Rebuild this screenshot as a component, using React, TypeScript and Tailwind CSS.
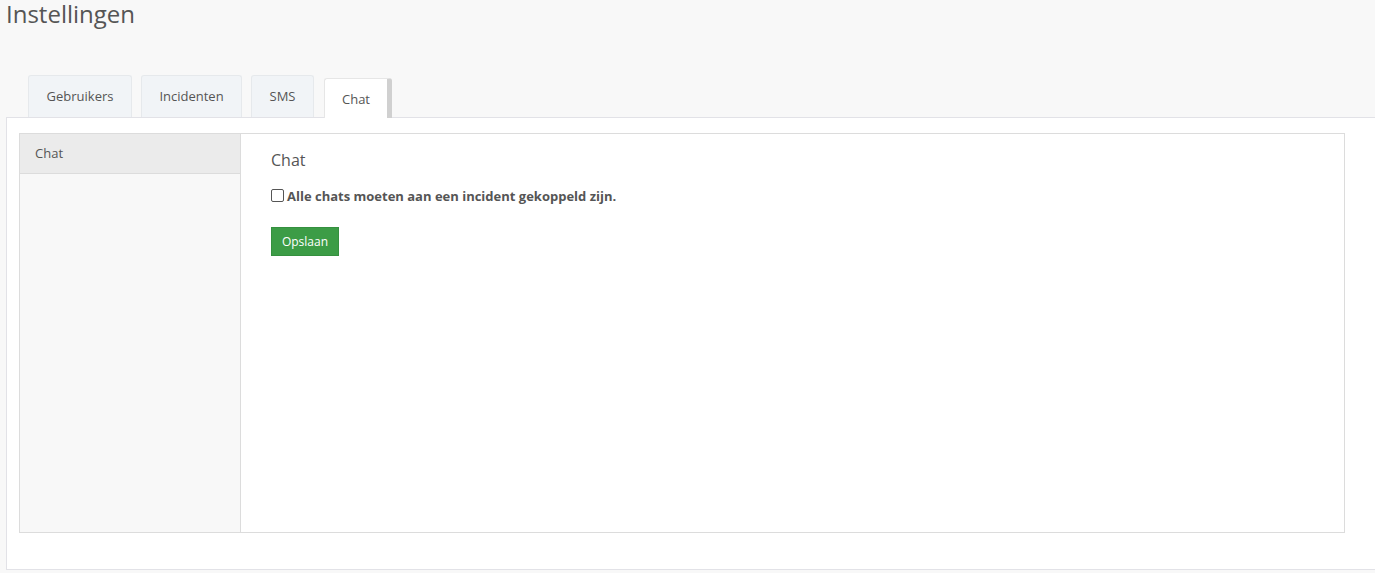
import React from "react";

export default function App() {
  const font = { fontFamily: '"Open Sans", "Liberation Sans", sans-serif' };
  return (
    <div className="w-full h-[573px] bg-[#f8f8f8] text-[#555] overflow-hidden" style={font}>
      <h1 className="pl-[6px] text-[24px] leading-[28px] font-normal text-[#555]">Instellingen</h1>
      <div className="flex items-end gap-[9px] pl-[28px] mt-[47px] h-[42px]">
        <div className="w-[104px] h-[42px] flex items-center justify-center bg-[#f1f4f7] border border-b-0 border-[#e6e9ec] rounded-t-[3px] text-[13px] text-[#555]">
          Gebruikers
        </div>
        <div className="w-[101px] h-[42px] flex items-center justify-center bg-[#f1f4f7] border border-b-0 border-[#e6e9ec] rounded-t-[3px] text-[13px] text-[#555]">
          Incidenten
        </div>
        <div className="w-[63px] h-[42px] flex items-center justify-center bg-[#f1f4f7] border border-b-0 border-[#e6e9ec] rounded-t-[3px] text-[13px] text-[#555]">
          SMS
        </div>
        <div className="w-[68px] h-[40px] ml-[1px] pt-[2px] flex items-center justify-center bg-white border-l border-t border-[#e6e6e6] border-r-[5px] border-r-[#d0d0d0] rounded-t-[3px] text-[13px] text-[#555] -mb-[1px] relative z-10">
          Chat
        </div>
      </div>
      <div className="ml-[6px] h-[453px] bg-white border border-r-0 border-[#e2e2e7] pl-[12px] pt-[15px]">
        <div className="w-[1326px] h-[400px] border border-[#dcdcdc] flex">
          <div className="w-[221px] bg-[#f8f8f8] border-r border-[#dcdcdc]">
            <div className="h-[40px] bg-[#ebebeb] border-b border-[#dcdcdc] pl-[15px] pt-[10px] text-[13px] leading-[18px] text-[#555]">
              Chat
            </div>
          </div>
          <div className="flex-1 pl-[30px] pt-[15px]">
            <div className="text-[16px] leading-[22px] text-[#555]">Chat</div>
            <label className="flex items-center mt-[16px] text-[13px] font-bold text-[#555] leading-[18px]">
              <span className="w-[13px] h-[13px] border border-[#555] rounded-[2px] bg-white mr-[3px] mt-[-2px]"></span>
              Alle chats moeten aan een incident gekoppeld zijn.
            </label>
            <button className="mt-[22px] w-[68px] h-[29px] bg-[#3c9c46] border border-[#35903f] text-white text-[12px] flex items-center justify-center">
              Opslaan
            </button>
          </div>
        </div>
      </div>
    </div>
  );
}
